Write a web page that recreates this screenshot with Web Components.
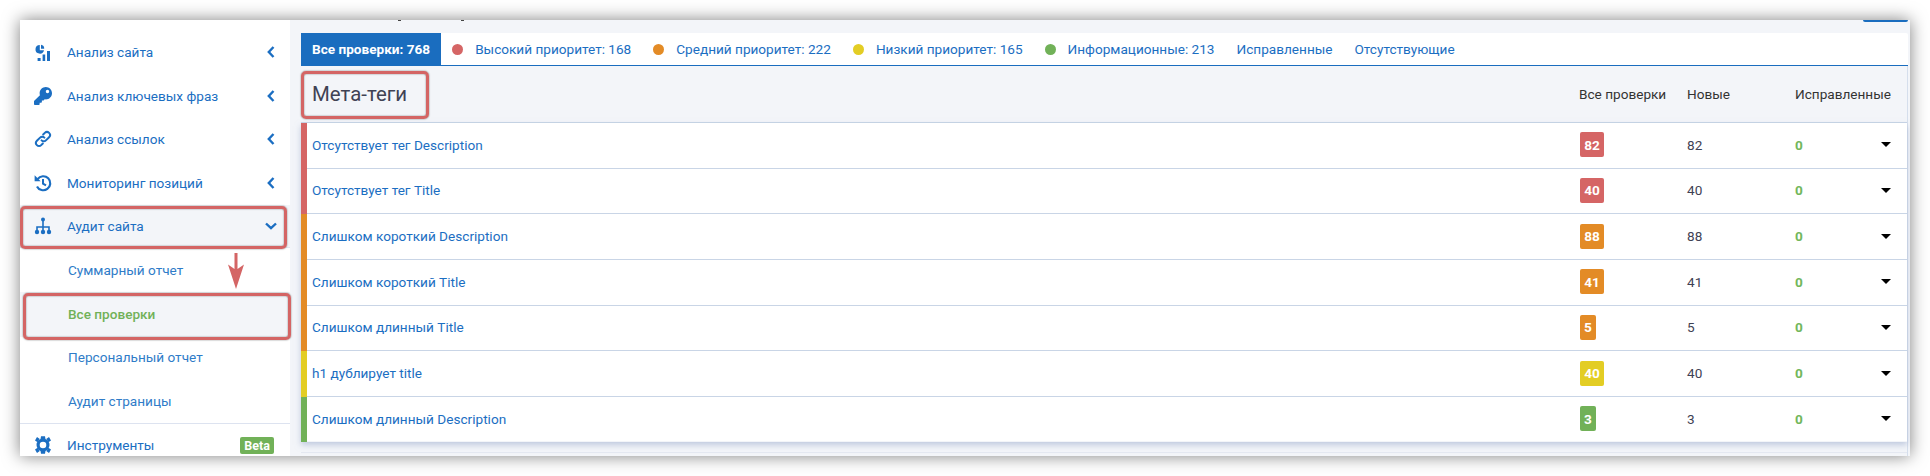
<!DOCTYPE html>
<html lang="ru">
<head>
<meta charset="utf-8">
<title>Все проверки</title>
<style>
  html, body { margin: 0; height: 100%; background: #fff; overflow: hidden; }
  body { padding: 20px; box-sizing: border-box; font-family: Roboto, "Liberation Sans", sans-serif; font-size: 13.6px; }
</style>
</head>
<body>
<audit-window>
  <side-nav slot="side">
    <nav-item icon="chart" arrow="left">Анализ сайта</nav-item>
    <nav-item icon="key" arrow="left">Анализ ключевых фраз</nav-item>
    <nav-item icon="link" arrow="left">Анализ ссылок</nav-item>
    <nav-item icon="history" arrow="left">Мониторинг позиций</nav-item>
    <nav-item icon="sitemap" arrow="down" active>Аудит сайта</nav-item>
    <sub-item>Суммарный отчет</sub-item>
    <sub-item current>Все проверки</sub-item>
    <sub-item>Персональный отчет</sub-item>
    <sub-item>Аудит страницы</sub-item>
    <nav-item icon="cog" beta ruled>Инструменты</nav-item>
  </side-nav>

  <tab-bar>
    <tab-item active>Все проверки: 768</tab-item>
    <tab-item dot="#d56565">Высокий приоритет: 168</tab-item>
    <tab-item dot="#e38b26">Средний приоритет: 222</tab-item>
    <tab-item dot="#e3cd24">Низкий приоритет: 165</tab-item>
    <tab-item dot="#71b158">Информационные: 213</tab-item>
    <tab-item>Исправленные</tab-item>
    <tab-item>Отсутствующие</tab-item>
  </tab-bar>

  <check-table title="Мета-теги">
    <check-row level="high" total="82" fresh="82">Отсутствует тег Description</check-row>
    <check-row level="high" total="40" fresh="40">Отсутствует тег Title</check-row>
    <check-row level="mid" total="88" fresh="88">Слишком короткий Description</check-row>
    <check-row level="mid" total="41" fresh="41">Слишком короткий Title</check-row>
    <check-row level="mid" total="5" fresh="5">Слишком длинный Title</check-row>
    <check-row level="low" total="40" fresh="40">h1 дублирует title</check-row>
    <check-row level="info" total="3" fresh="3">Слишком длинный Description</check-row>
  </check-table>
</audit-window>

<script>
const ICONS = {
  chart: `<svg viewBox="0 0 18 18"><path d="M5.800 2a4.300 4.300 0 1 0 4.200 5.200H5.800z"/><path d="M7 1.700a4 4 0 0 1 3.200 4.100H7z"/><rect x="3.600" y="15" width="3" height="3"/><rect x="8.600" y="11.500" width="2.600" height="6.500"/><rect x="13" y="8" width="3" height="10"/></svg>`,
  key: `<svg viewBox="0 0 512 512"><path d="M512 176.001C512 273.203 433.202 352 336 352c-11.22 0-22.19-1.062-32.827-3.069l-24.012 27.014A23.999 23.999 0 0 1 261.223 384H224v40c0 13.255-10.745 24-24 24h-40v40c0 13.255-10.745 24-24 24H24c-13.255 0-24-10.745-24-24v-78.059c0-6.365 2.529-12.47 7.029-16.971l161.802-161.802C163.108 213.814 160 195.271 160 176 160 78.798 238.797.001 335.999 0 433.488-.001 512 78.511 512 176.001zM336 128c0 26.51 21.49 48 48 48s48-21.49 48-48-21.49-48-48-48-48 21.49-48 48z"/></svg>`,
  link: `<svg viewBox="0 0 18 18"><path d="M7.600 10.400a3 3 0 0 0 4.300 0l3.200-3.200a3 3 0 0 0-4.300-4.300L9.200 4.500M10.400 7.600a3 3 0 0 0-4.300 0l-3.200 3.200a3 3 0 0 0 4.300 4.300l1.600-1.600" fill="none" stroke="currentColor" stroke-width="2" stroke-linecap="round"/></svg>`,
  history: `<svg viewBox="0 0 18 18"><path d="M3.600 5.100A7 7 0 1 1 3 12.400" fill="none" stroke="currentColor" stroke-width="2.200"/><path d="M.6 1.200v6h6z"/><path d="M9 5v4.600l3 1.800" fill="none" stroke="currentColor" stroke-width="2"/></svg>`,
  sitemap: `<svg viewBox="0 0 18 18"><circle cx="9" cy="2.600" r="2"/><circle cx="3" cy="15" r="2.200"/><circle cx="9" cy="15" r="2.200"/><circle cx="15" cy="15" r="2.200"/><path d="M9 4v10M3 14v-4h12v4" fill="none" stroke="currentColor" stroke-width="1.600"/></svg>`,
  cog: `<svg viewBox="0 0 18 18"><circle cx="9" cy="9" r="4.900" fill="none" stroke="currentColor" stroke-width="3.200"/><path d="M7 .3h4l.5 3h-5zM7 17.700h4l.5-3h-5zM1 4.400l2-3.400 2.800 2-2.200 3.300zM17 4.400l-2-3.400-2.800 2 2.200 3.300zM1 13.600l2 3.400 2.800-2-2.200-3.300zM17 13.600l-2 3.400-2.800-2 2.200-3.300z"/></svg>`
};

function define(name, css, html) {
  class Box extends HTMLElement {
    constructor() {
      super();
      this.attachShadow({ mode: "open" });
    }
    connectedCallback() {
      this.shadowRoot.innerHTML = `<style>${css}</style>${html(this)}`;
    }
  }
  customElements.define(name, Box);
}

define("audit-window", `
  :host { display: flex; position: relative; width: 1890px; height: 436px; overflow: hidden; background: #f3f5f9;
          box-shadow: 0 0 16px rgba(0,0,0,.5); }
  .side { flex: 0 0 270px; display: block; }
  .main { flex: 1; min-width: 0; padding: 13px 2px 0 11px; display: flex; flex-direction: column; }
  .top { position: absolute; top: 0; left: 281px; right: 2px; height: 13px; }
  .btn { position: absolute; right: 0; top: 0; width: 45px; height: 2px; background: #1a6dbf; border-radius: 0 0 2px 2px; }
  .tail { position: absolute; top: 0; width: 3px; height: 1px; background: #444; }
  .mark { position: absolute; border: 3px solid #d46565; border-radius: 5px; box-shadow: 0 0 1.5px #555, inset 0 0 1.5px #555; box-sizing: border-box; pointer-events: none; }
  .a { left: 0; top: 186px; width: 267px; height: 43px; }
  .b { left: 3px; top: 273px; width: 268px; height: 47px; }
  .c { left: 281px; top: 51px; width: 128px; height: 48px; }
  svg.arrow { position: absolute; left: 207px; top: 233px; width: 18px; height: 37px; }
`, () => `
  <slot class="side" name="side"></slot>
  <div class="main"><slot></slot></div>
  <div class="top"><span class="tail" style="left:97px"></span><span class="tail" style="left:160px"></span><span class="btn"></span></div>
  <div class="mark a"></div><div class="mark b"></div><div class="mark c"></div>
  <svg class="arrow" viewBox="0 0 18 37"><path d="M7.500 0h3v16l6.500-4.500L9 36 1 11.500 7.500 16z" fill="#d46565"/></svg>
`);

define("side-nav", `
  :host { display: flex; flex-direction: column; height: 436px; padding-top: 10.5px; box-sizing: border-box; background: #fff; }
`, () => `<slot></slot>`);

define("nav-item", `
  :host { display: flex; align-items: center; flex: 0 0 43.6px; box-sizing: border-box; padding-left: 14px; color: #1b6ec2; font-size: 13.6px; }
  :host([active]) { background: #f3f5f9; border-bottom: 1px solid #e3e8f2; }
  :host([ruled]) { border-top: 1px solid #dde3f0; }
  svg.i { width: 18px; height: 18px; fill: currentColor; flex: none; margin-right: 15px; }
  .t { flex: 1; }
  svg.c { width: 8px; height: 12px; margin-right: 15px; fill: none; stroke: currentColor; stroke-width: 2.4; }
  :host([arrow=down]) svg.c { width: 12px; height: 8px; margin-right: 13px; }
  .beta { background: #71b158; color: #fff; font-size: 12.5px; font-weight: 700; padding: 0 4px; border-radius: 2px; margin-right: 16px; line-height: 17px; }
`, (el) => {
  const arrow = el.getAttribute("arrow");
  return `${ICONS[el.getAttribute("icon")].replace("<svg", '<svg class="i"')}
    <span class="t"><slot></slot></span>
    ${arrow === "left" ? '<svg class="c" viewBox="0 0 8 12"><path d="M6.500 1 1.800 6l4.700 5"/></svg>' : ""}
    ${arrow === "down" ? '<svg class="c" viewBox="0 0 12 8"><path d="M1 1.500 6 6.200l5-4.700"/></svg>' : ""}
    ${el.hasAttribute("beta") ? '<span class="beta">Beta</span>' : ""}`;
});

define("sub-item", `
  :host { display: flex; align-items: center; flex: 0 0 43.6px; padding-left: 48px; color: #2f7cc8; font-size: 13.6px; }
  :host([current]) { color: #71b158; font-weight: 500; background: #f3f5f9; box-shadow: 0 1px 0 #f3f5f9; }
`, () => `<slot></slot>`);

define("tab-bar", `
  :host { display: flex; flex: 0 0 32px; background: #fff; border-bottom: 1px solid #1a6dbf; border-radius: 2px 2px 0 0; }
`, () => `<slot></slot>`);

define("tab-item", `
  :host { display: flex; align-items: center; padding: 0 11px; color: #1b6ec2; font-size: 13.6px; white-space: nowrap; }
  :host([active]) { background: #1a6dbf; color: #fff; font-weight: 700; padding: 0 11px; }
  .dot { width: 11px; height: 11px; border-radius: 50%; margin-right: 12px; }
`, (el) => {
  const dot = el.getAttribute("dot");
  return `${dot ? `<span class="dot" style="background:${dot}"></span>` : ""}<slot></slot>`;
});

define("check-table", `
  :host { display: block; flex: 1; background: #f3f5f9; border-right: 1px solid #d5deec; }
  header { display: grid; grid-template-columns: 1fr 108px 108px 112px; align-items: center; height: 57px; box-sizing: border-box;
           padding-left: 11px; border-bottom: 1px solid #c9d5e6; font-size: 13.6px; color: #333; }
  h2 { margin: 0; font-size: 20.400px; font-weight: 400; color: #3f4254; }
  .rows { display: flex; flex-direction: column; height: 318.500px; box-shadow: 0 3px 6px rgba(150,165,200,.55); }
  .rest { margin-top: 10px; border-top: 1px solid #e4e8f1; height: 6px; }
`, (el) => `
  <header><h2>${el.getAttribute("title")}</h2><span>Все проверки</span><span>Новые</span><span>Исправленные</span></header>
  <div class="rows"><slot></slot></div>
  <div class="rest"></div>
`);

const LEVELS = { high: "#d56565", mid: "#e38b26", low: "#e3cd24", info: "#71b158" };

define("check-row", `
  :host { display: grid; grid-template-columns: 1fr 108px 108px 86px 26px; align-items: center; flex: 1; box-sizing: border-box;
          padding: 0 0 1px 6px; background: #fff; border-bottom: 1px solid #c9d5e6; position: relative; color: #3f4254; font-size: 13.6px; }
  :host(:last-child) { border-bottom: 0; }
  .bar { position: absolute; left: 0; top: 0; bottom: -1px; width: 6px; }
  .name { color: #1b6ec2; padding-left: 5px; }
  .badge { display: inline-flex; align-items: center; justify-content: center; height: 25px; min-width: 8px; padding: 0 4px; border-radius: 2px;
           color: #fff; font-weight: 700; font-size: 13.6px; margin-left: 1px; }
  .badge.two { min-width: 16px; }
  .zero { color: #72b75c; font-weight: 700; }
  .caret { width: 0; height: 0; border: 5px solid transparent; border-top: 5px solid #000; border-bottom: 0; }
`, (el) => {
  const total = el.getAttribute("total");
  const color = LEVELS[el.getAttribute("level")];
  return `<span class="bar" style="background:${color}"></span>
    <span class="name"><slot></slot></span>
    <span><span class="badge ${total.length > 1 ? "two" : ""}" style="background:${color}">${total}</span></span>
    <span>${el.getAttribute("fresh")}</span>
    <span class="zero">0</span>
    <span class="caret"></span>`;
});
</script>
</body>
</html>
